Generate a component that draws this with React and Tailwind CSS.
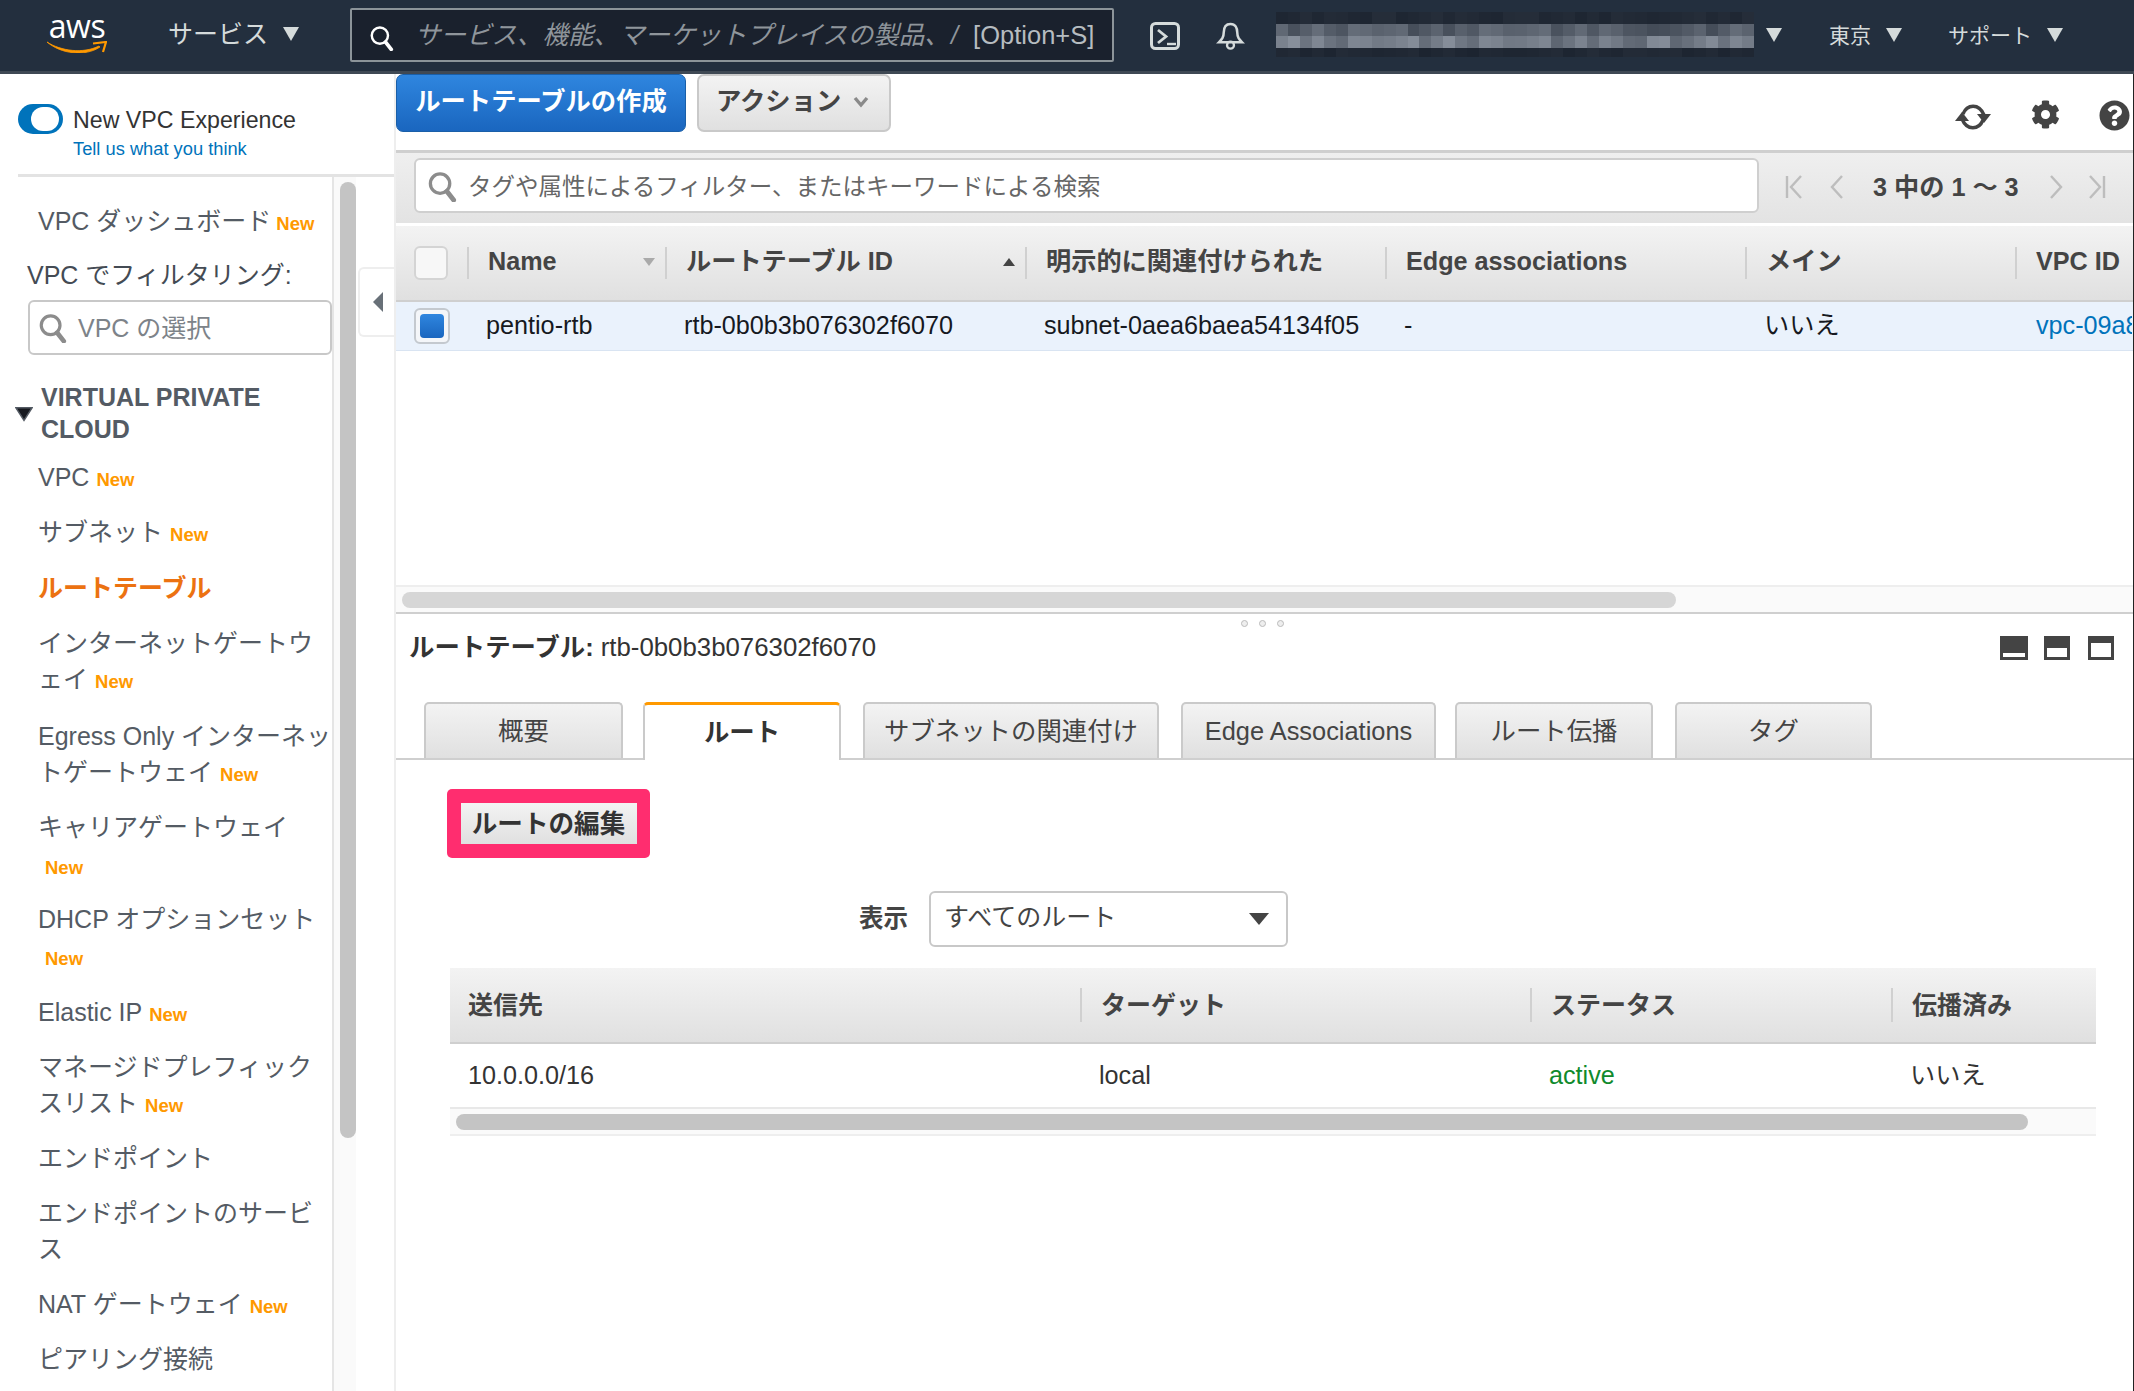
import React from "react";
import { FaCog, FaQuestionCircle } from "react-icons/fa";

const Caret = ({ className = "" }) => (
  <svg viewBox="0 0 18 16" className={className}><polygon points="1,1 17,1 9,15" fill="#d5dbdb" /></svg>
);

const Mag = ({ className = "", color = "#8c8c8c", w = 3.4 }) => (
  <svg viewBox="0 0 30 32" className={className} fill="none">
    <circle cx="13" cy="13" r="10" stroke={color} strokeWidth={w} />
    <line x1="20" y1="21" x2="27" y2="30" stroke={color} strokeWidth={w + 1.6} strokeLinecap="round" />
  </svg>
);

const New = () => <span className="ml-[7px] text-[18.5px] font-bold leading-none text-[#ff9900]">New</span>;

function Mosaic() {
  const rows = [
    { h: "h-[12px]", base: 34, spread: 8 },
    { h: "h-[12px]", base: 72, spread: 34 },
    { h: "h-[12px]", base: 98, spread: 42 },
    { h: "h-[9px]", base: 32, spread: 8 },
  ];
  return (
    <div className="flex flex-col w-[478px]">
      {rows.map((r, ri) => (
        <div key={ri} className={`flex ${r.h}`}>
          {Array.from({ length: 40 }).map((_, i) => {
            const v = r.base + ((i * 37 + ri * 53 + (i * i) % 23) % 29) / 29 * r.spread;
            const g = Math.round(v);
            return <div key={i} className="flex-1" style={{ background: `rgb(${g - 4},${g + 4},${g + 16})` }} />;
          })}
        </div>
      ))}
    </div>
  );
}

function TopNav() {
  return (
    <header className="flex h-[74px] shrink-0 items-start bg-[#232f3e] border-b-[3px] border-[#3f4954] text-[#d5dbdb] text-[25px]">
      <div className="ml-[47px] mt-[8px] flex w-[60px] flex-col items-center">
        <span className="text-[32px] leading-[36px] font-medium text-white tracking-[-0.5px] [font-family:'Open_Sans',sans-serif]">aws</span>
        <svg viewBox="0 0 60 12" className="-mt-[3px] h-[12px] w-[60px]">
          <path d="M0 1 C14 10 36 13 52 5 L53 6 C38 16 14 13 0 1 Z" fill="#ff9900" stroke="#ff9900" strokeWidth="0.8" />
          <path d="M46 2.5 L59 1 L56 11" fill="none" stroke="#ff9900" strokeWidth="2.2" />
        </svg>
      </div>
      <div className="ml-[61px] mt-[17px] flex items-center leading-[34px]">
        <span>サービス</span>
        <Caret className="ml-[14px] h-[16px] w-[18px]" />
      </div>
      <div className="ml-[50px] mt-[8px] flex h-[54px] w-[764px] items-center border-2 border-[#8c9499] rounded-[2px] bg-[#1a212d] text-[25.5px] text-[#8f959b]">
        <Mag className="ml-[17px] mt-[6px] h-[26px] w-[25px] shrink-0" color="#ffffff" w={3} />
        <span className="ml-[21px] w-[536px] whitespace-nowrap italic">サービス、機能、マーケットプレイスの製品、</span>
        <span className="italic">/</span>
        <span className="ml-[15px] text-[25.5px] text-[#b6bcc0]">[Option+S]</span>
      </div>
      <svg viewBox="0 0 30 28" fill="none" className="ml-[36px] mt-[22px] h-[28px] w-[30px]">
        <rect x="1.5" y="1.5" width="27" height="25" rx="4" stroke="#d5dbdb" strokeWidth="3" />
        <path d="M8 8 L16 14.5 L8 21" stroke="#d5dbdb" strokeWidth="2.8" />
        <path d="M17 22 L26 22" stroke="#d5dbdb" strokeWidth="2.4" />
      </svg>
      <svg viewBox="0 0 30 30" fill="none" className="ml-[36px] mt-[21px] h-[29px] w-[29px]">
        <path d="M15 3 C10 3 8 7 8 12 C8 17 6 19 3 22 L27 22 C24 19 22 17 22 12 C22 7 20 3 15 3 Z" stroke="#d5dbdb" strokeWidth="2.6" />
        <circle cx="15" cy="25" r="3.6" stroke="#d5dbdb" strokeWidth="2.4" />
      </svg>
      <div className="ml-[31px] mt-[12px]"><Mosaic /></div>
      <Caret className="ml-[11px] mt-[27px] h-[16px] w-[18px]" />
      <span className="ml-[46px] mt-[19px] leading-[34px] text-[21px]">東京</span>
      <Caret className="ml-[14px] mt-[27px] h-[16px] w-[18px]" />
      <span className="ml-[45px] mt-[19px] leading-[34px] text-[21px]">サポート</span>
      <Caret className="ml-[14px] mt-[27px] h-[16px] w-[18px]" />
    </header>
  );
}

const navItems = [
  { l: ["VPC"], cls: "mb-[19px]" },
  { l: ["サブネット"], cls: "mb-[20px]" },
  { l: ["ルートテーブル"], active: true, cls: "mb-[19px] font-bold text-[#ec7211]" },
  { l: ["インターネットゲートウ", "ェイ"], cls: "mb-[19px]" },
  { l: ["Egress Only インターネッ", "トゲートウェイ"], cls: "mt-[2px] mb-[19px]" },
  { l: ["キャリアゲートウェイ"], own: "mt-[2px]", cls: "mb-[18px]" },
  { l: ["DHCP オプションセット"], own: "mt-[1px]", cls: "mb-[20px]" },
  { l: ["Elastic IP"], cls: "mb-[19px]" },
  { l: ["マネージドプレフィック", "スリスト"], cls: "mb-[19px]" },
  { l: ["エンドポイント"], none: true, cls: "mb-[19px]" },
  { l: ["エンドポイントのサービ", "ス"], none: true, cls: "mb-[19px]" },
  { l: ["NAT ゲートウェイ"], cls: "mb-[19px]" },
  { l: ["ピアリング接続"], none: true, cls: "mb-[19px]" },
];

function Sidebar() {
  return (
    <aside className="flex w-[394px] shrink-0 flex-col">
      <div className="ml-[18px] flex h-[103px] shrink-0 items-start border-b-[3px] border-[#e3e3e3]">
        <div className="mt-[30px] flex h-[30px] w-[45px] items-center justify-end rounded-full bg-[#0073bb] pr-[4px]">
          <div className="h-[24px] w-[28px] rounded-full bg-white" />
        </div>
        <div className="ml-[10px] mt-[31px] flex flex-col">
          <span className="text-[23.2px] leading-[30px] text-[#333]">New VPC Experience</span>
          <span className="mt-[3px] text-[18.3px] leading-[22px] text-[#0073bb]">Tell us what you think</span>
        </div>
      </div>
      <div className="flex flex-1 overflow-hidden">
        <nav className="w-[334px] shrink-0 border-r-2 border-[#e5e5e5] text-[25px] leading-[36px] text-[#545b64] whitespace-nowrap">
          <div className="ml-[38px] mt-[26px]">VPC ダッシュボード<span className="ml-[5px] text-[18.5px] font-bold leading-none text-[#ff9900]">New</span></div>
          <div className="ml-[27px] mt-[18px] text-[#444b54]">VPC でフィルタリング:</div>
          <div className="ml-[28px] mt-[7px] flex h-[55px] w-[304px] items-center rounded-[6px] border-2 border-[#c8c8c8] pl-[8px] text-[#7d8389]">
            <Mag className="h-[30px] w-[29px]" />
            <span className="ml-[11px]">VPC の選択</span>
          </div>
          <div className="mt-[26px] flex items-center">
            <svg viewBox="0 0 20 16" className="ml-[15px] mt-[1px] h-[16px] w-[18px]"><polygon points="1,1 19,1 10,15" fill="#16191f" stroke="#545b64" strokeWidth="1.6" /></svg>
            <span className="ml-[8px] font-bold leading-[32px] text-[25px]">VIRTUAL PRIVATE<br />CLOUD</span>
          </div>
          <div className="ml-[38px] mt-[14px] flex flex-col">
            {navItems.map((it, i) => (
              <div key={i} className={it.cls}>
                {it.l.map((t, j) => (
                  <div key={j} className="h-[36px]">
                    {t}
                    {!it.active && !it.none && !it.own && j === it.l.length - 1 && <New />}
                  </div>
                ))}
                {it.own && <div className={`h-[36px] ${it.own}`}><span className="ml-[7px] text-[18.5px] font-bold leading-none text-[#ff9900]">New</span></div>}
              </div>
            ))}
          </div>
        </nav>
        <div className="w-[22px] shrink-0 bg-[#fafafa] pl-[6px] pt-[5px]">
          <div className="h-[956px] w-[16px] rounded-[8px] bg-[#c4c4c4]" />
        </div>
        <div className="flex-1 pl-[2px] pt-[90px]">
          <div className="flex h-[70px] w-[36px] items-center rounded-l-[6px] border-2 border-r-0 border-[#eeeeee] pl-[13px]">
            <svg viewBox="0 0 10 20" className="h-[20px] w-[10px]"><polygon points="10,0 10,20 0,10" fill="#687078" /></svg>
          </div>
        </div>
      </div>
    </aside>
  );
}

const Chev = ({ d }) => (
  <svg viewBox="0 0 20 24" className="h-[24px] w-[20px]" fill="none" stroke="#bdbdbd" strokeWidth="2.4"><path d={d} /></svg>
);

const grad = "bg-gradient-to-b from-[#f3f3f3] to-[#e0e0e0]";

function Toolbar() {
  return (
    <div className="flex h-[76px] shrink-0 items-start">
      <button className="h-[58px] w-[290px] rounded-[7px] border border-[#1a5fa8] bg-gradient-to-b from-[#2f86df] to-[#1a66bf] pb-[2px] text-[25.3px] font-bold text-white">ルートテーブルの作成</button>
      <button className={`ml-[11px] flex h-[58px] w-[194px] items-center rounded-[7px] border-2 border-[#c9c9c9] pb-[2px] pl-[17px] text-[25.3px] font-bold text-[#444] ${grad}`}>
        アクション
        <svg viewBox="0 0 16 12" className="ml-[12px] h-[12px] w-[16px]" fill="none" stroke="#8a8a8a" strokeWidth="3.4"><path d="M2 2 L8 9 L14 2" /></svg>
      </button>
      <div className="ml-auto mr-[3px] mt-[28px] flex items-center text-[#444]">
        <svg viewBox="0 0 38 28" fill="none" className="h-[28px] w-[38px]" stroke="#444" strokeWidth="3.4">
          <path d="M9 11 C13 1 25 0 30 12" />
          <path d="M29 17 C25 27 13 28 8 16" />
          <polygon points="23,11 37,11 30,20" fill="#444" stroke="none" />
          <polygon points="1,18 15,18 8,9" fill="#444" stroke="none" />
        </svg>
        <FaCog className="ml-[39px] -mt-[4px] h-[29px] w-[29px]" />
        <FaQuestionCircle className="ml-[39px] -mt-[2px] h-[31px] w-[31px]" />
      </div>
    </div>
  );
}

function FilterBand() {
  return (
    <div className="flex h-[76px] shrink-0 items-start border-t-[3px] border-b-[3px] border-t-[#cfcfcf] border-b-white bg-gradient-to-b from-[#efefef] to-[#e3e3e3] pl-[18px]">
      <div className="mt-[5px] flex h-[55px] w-[1345px] items-center rounded-[6px] border-2 border-[#cfcfcf] bg-white pl-[11px] text-[23.5px] text-[#666]">
        <Mag className="mt-[2px] h-[31px] w-[30px]" />
        <span className="ml-[11px] pt-[5px]">タグや属性によるフィルター、またはキーワードによる検索</span>
      </div>
      <div className="ml-[25px] mt-[19px] flex items-center">
        <Chev d="M3 1 L3 23 M17 1 L7 12 L17 23" />
        <div className="ml-[23px]"><Chev d="M15 1 L5 12 L15 23" /></div>
        <span className="ml-[26px] text-[25.2px] font-bold leading-[30px] text-[#444]">3 中の 1 〜 3</span>
        <div className="ml-[27px]"><Chev d="M5 1 L15 12 L5 23" /></div>
        <div className="ml-[21px]"><Chev d="M3 1 L13 12 L3 23 M17 1 L17 23" /></div>
      </div>
    </div>
  );
}

const cols = ["w-[198px]", "w-[360px]", "w-[360px]", "w-[360px]", "w-[270px]", "w-[117px]"];

function TopTable() {
  const heads = [
    { t: "Name", icon: <svg viewBox="0 0 12 8" className="ml-auto mr-[10px] h-[8px] w-[12px]"><polygon points="0,0 12,0 6,8" fill="#aaaaaa" /></svg> },
    { t: "ルートテーブル ID", icon: <svg viewBox="0 0 12 8" className="ml-auto mr-[10px] h-[8px] w-[12px]"><polygon points="0,8 12,8 6,0" fill="#444" /></svg> },
    { t: "明示的に関連付けられた" },
    { t: "Edge associations" },
    { t: "メイン" },
    { t: "VPC ID" },
  ];
  const cells = ["pentio-rtb", "rtb-0b0b3b076302f6070", "subnet-0aea6baea54134f05", "-", "いいえ"];
  return (
    <div className="shrink-0 overflow-hidden">
      <div className={`flex h-[76px] items-center border-b-2 border-[#cfcfcf] pl-[18px] ${grad}`}>
        <div className="w-[53px] shrink-0">
          <div className="h-[34px] w-[34px] rounded-[6px] border-2 border-[#d4d4d4] bg-[#f7f7f7]" />
        </div>
        {heads.map((h, i) => (
          <div key={i} className={`flex h-[32px] shrink-0 items-center whitespace-nowrap border-l-2 border-[#d0d0d0] pb-[2px] pl-[19px] text-[25.2px] font-bold text-[#444] ${cols[i]}`}>
            {h.t}
            {h.icon}
          </div>
        ))}
      </div>
      <div className="flex h-[49px] items-center border-b border-[#d9e4f2] bg-[#eaf2fc] pl-[18px] text-[25.2px] text-[#16191f]">
        <div className="w-[53px] shrink-0">
          <div className="flex h-[36px] w-[36px] items-center justify-center rounded-[6px] border-2 border-[#c4c9cf] bg-[#f4f6f9]">
            <div className="h-[24px] w-[24px] rounded-[4px] bg-gradient-to-b from-[#2f86df] to-[#1a66bf]" />
          </div>
        </div>
        {cells.map((c, i) => (
          <div key={i} className={`shrink-0 whitespace-nowrap pl-[19px] ${cols[i]}`}>{c}</div>
        ))}
        <div className={`shrink-0 overflow-hidden whitespace-nowrap pl-[21px] text-[#0073bb] ${cols[5]}`}>vpc-09a8c1f3</div>
      </div>
    </div>
  );
}

function Tabs() {
  const base = "flex h-[56px] shrink-0 items-center justify-center rounded-t-[5px] border-2 border-b-0 border-[#cacaca] text-[25.4px] text-[#444]";
  return (
    <div className="flex h-[58px] shrink-0 border-b-2 border-[#cfcfcf] pl-[28px]">
      <div className={`${base} ${grad} w-[199px] mr-[20px]`}>概要</div>
      <div className="flex h-[58px] w-[198px] mr-[22px] shrink-0 items-center justify-center rounded-t-[5px] border-2 border-b-0 border-t-[3px] border-x-[#cacaca] border-t-[#ff9900] bg-white text-[25.4px] font-bold text-[#333]">ルート</div>
      <div className={`${base} ${grad} w-[296px] mr-[22px]`}>サブネットの関連付け</div>
      <div className={`${base} ${grad} w-[255px] mr-[19px]`}>Edge Associations</div>
      <div className={`${base} ${grad} w-[198px] mr-[22px]`}>ルート伝播</div>
      <div className={`${base} ${grad} w-[197px]`}>タグ</div>
    </div>
  );
}

const PaneIcon = ({ w, inner }) => (
  <div className={`flex h-[24px] flex-col justify-end bg-[#444] px-[3px] pb-[3px] ${w}`}>
    <div className={`bg-white ${inner}`} />
  </div>
);

function BottomPane() {
  const heads = [
    ["送信先", "w-[630px]"],
    ["ターゲット", "w-[450px]"],
    ["ステータス", "w-[361px]"],
    ["伝播済み", "w-[205px]"],
  ];
  return (
    <div className="flex flex-1 flex-col">
      <div className="flex h-[88px] shrink-0 items-start">
        <div className="ml-[13px] mt-[16px] text-[25.4px] leading-[34px] text-[#333]">
          <span className="font-bold">ルートテーブル:</span> <span className="text-[25.8px]">rtb-0b0b3b076302f6070</span>
        </div>
        <div className="ml-auto mr-[19px] mt-[22px] flex">
          <PaneIcon w="w-[28px]" inner="h-[4px]" />
          <div className="ml-[16px]"><PaneIcon w="w-[26px]" inner="h-[9px]" /></div>
          <div className="ml-[18px]"><PaneIcon w="w-[26px]" inner="h-[14px]" /></div>
        </div>
      </div>
      <Tabs />
      <div className="ml-[51px] mt-[29px] flex h-[69px] w-[203px] items-center justify-center rounded-[5px] bg-[#ff2d6f]">
        <div className={`flex h-[41px] w-[176px] items-center justify-center pt-[1px] text-[25.6px] font-bold text-[#333] ${grad}`}>ルートの編集</div>
      </div>
      <div className="ml-[463px] mt-[33px] flex items-center">
        <span className="w-[49px] whitespace-nowrap text-[24.5px] font-bold text-[#444]">表示</span>
        <div className="ml-[21px] flex h-[56px] w-[359px] items-center rounded-[6px] border-2 border-[#c8c8c8] pb-[3px] pl-[13px] text-[25px] text-[#444]">
          すべてのルート
          <svg viewBox="0 0 20 12" className="ml-auto mr-[17px] mt-[3px] h-[12px] w-[20px]"><polygon points="0,0 20,0 10,12" fill="#444" /></svg>
        </div>
      </div>
      <div className="ml-[54px] mt-[21px] w-[1646px]">
        <div className={`flex h-[76px] items-center border-b-2 border-[#cfcfcf] ${grad}`}>
          {heads.map(([t, w], i) => (
            <div key={i} className={`flex h-[34px] items-center ${w} ${i === 0 ? "pl-[18px] pt-[2px]" : "border-l-2 border-[#d0d0d0] pl-[19px] pt-[2px]"} text-[25px] font-bold text-[#444]`}>{t}</div>
          ))}
        </div>
        <div className="flex h-[65px] items-center border-b-2 border-[#e8e8e8] text-[25.2px] text-[#333]">
          <div className="w-[630px] pl-[18px]">10.0.0.0/16</div>
          <div className="w-[450px] pl-[19px]">local</div>
          <div className="w-[361px] pl-[19px] text-[#0f8a2c]">active</div>
          <div className="w-[205px] pl-[19px]">いいえ</div>
        </div>
        <div className="h-[27px] border-b-2 border-[#eeeeee] bg-[#fafafa] pl-[6px] pt-[5px]">
          <div className="h-[16px] w-[1572px] rounded-[8px] bg-[#c4c4c4]" />
        </div>
      </div>
    </div>
  );
}

export default function App() {
  return (
    <div className="flex h-[1391px] w-[2134px] flex-col overflow-hidden bg-white [font-family:'Liberation_Sans','Noto_Sans_CJK_JP',sans-serif]">
      <TopNav />
      <div className="flex min-h-0 flex-1">
        <Sidebar />
        <main className="flex min-w-0 flex-1 flex-col border-l-2 border-r border-l-[#eeeeee] border-r-[#222]">
          <Toolbar />
          <FilterBand />
          <TopTable />
          <div className="h-[234px] shrink-0" />
          <div className="relative h-[29px] shrink-0 border-y-2 border-t-[#eeeeee] border-b-[#cfcfcf] bg-[#fafafa] pl-[6px] pt-[5px]">
            <div className="h-[16px] w-[1274px] rounded-[8px] bg-[#d6d6d6]" />
            <div className="absolute left-[845px] top-[33px] flex gap-[11px]">
              <div className="h-[7px] w-[7px] rounded-full border border-[#bbb] bg-[#eee]" />
              <div className="h-[7px] w-[7px] rounded-full border border-[#bbb] bg-[#eee]" />
              <div className="h-[7px] w-[7px] rounded-full border border-[#bbb] bg-[#eee]" />
            </div>
          </div>
          <BottomPane />
        </main>
      </div>
    </div>
  );
}
